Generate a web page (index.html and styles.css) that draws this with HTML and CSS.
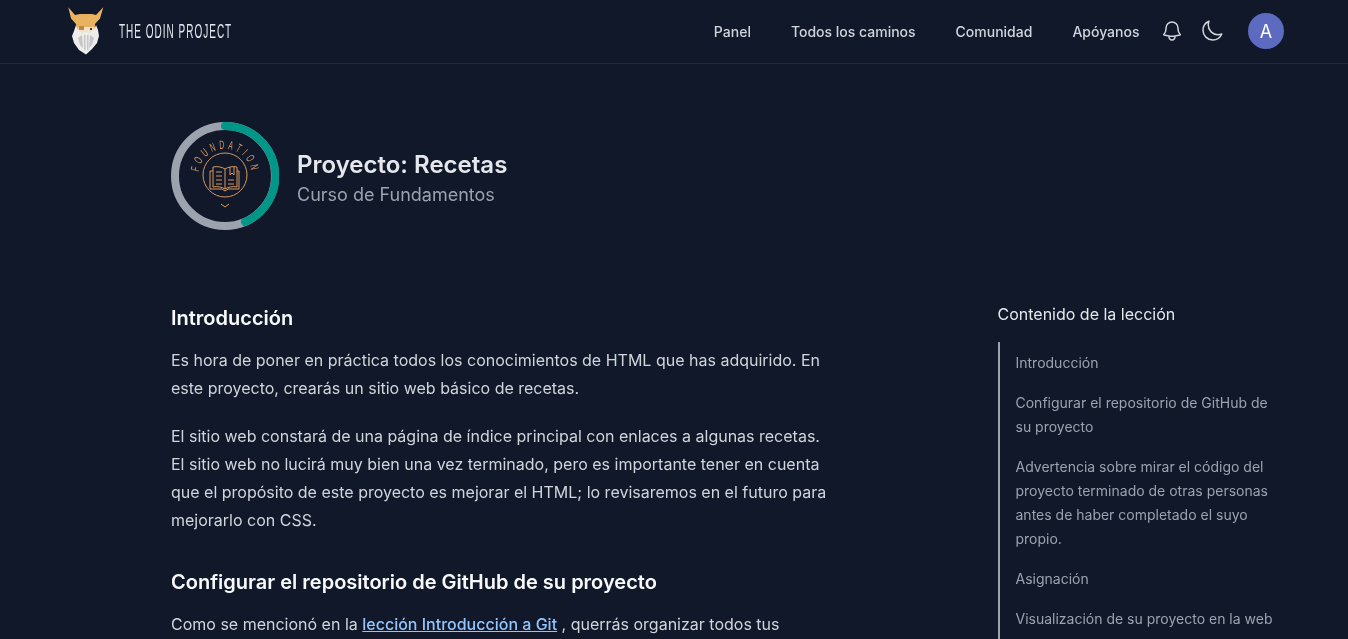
FILE: index.html
```html
<!DOCTYPE html>
<html lang="es">
<head>
    <meta charset="UTF-8">
    <meta name="viewport" content="width=device-width, initial-scale=1.0">
    <title>Proyecto: Recetas | The Odin Project</title>
    <link rel="stylesheet" href="styles.css">
</head>
<body>
    <header class="navbar">
        <a class="brand" href="#">
            <svg class="brand-logo" viewBox="0 0 36 48" width="36" height="48">
                <path fill="#e8b25e" d="M0.3 0.3L7 8 12 7H24L28 8 35.300 0.300 32 11.500 27 17 27 25H9L8 17 3 11.500z"/>
                <path fill="#f1e2cc" d="M11 20h15l1 5-4 3H13l-4-3z"/>
                <path fill="#b88a45" d="M11 19h5v4h-5z"/>
                <path fill="#ededed" d="M8 18l2 5 4 3 4-1 4 1 4-3 2-5 2 5 1 6-2 7-5 6-6 5.500-7-4.500-5-7-2-7 2-5z"/>
                <path fill="#c6c6c6" d="M10 31l4-3 1 13-3-3zM16 28h1.500v15H16zM19 28h1.500v15H19zM22 28l4 3-2 7-3 3z"/>
                <path fill="#33343a" d="M22 21h2v2h-2z"/>
            </svg>
            <span class="brand-name">THE ODIN PROJECT</span>
        </a>
        <nav class="nav-links">
            <a href="#">Panel</a>
            <a href="#">Todos los caminos</a>
            <a href="#">Comunidad</a>
            <a href="#">Apóyanos</a>
        </nav>
        <div class="nav-icons">
            <svg class="nav-icon" viewBox="0 0 24 24" width="24" height="24" fill="none" stroke="currentColor" stroke-width="1.5" stroke-linecap="round" stroke-linejoin="round">
                <path d="M14.857 17.082a23.848 23.848 0 005.454-1.31A8.967 8.967 0 0118 9.75v-.7V9A6 6 0 006 9v.75a8.967 8.967 0 01-2.312 6.022c1.733.64 3.56 1.085 5.455 1.31m5.714 0a24.255 24.255 0 01-5.714 0m5.714 0a3 3 0 11-5.714 0"/>
            </svg>
            <svg class="nav-icon" viewBox="0 0 24 24" width="24" height="24" fill="none" stroke="currentColor" stroke-width="1.5" stroke-linecap="round" stroke-linejoin="round">
                <path d="M21.752 15.002A9.718 9.718 0 0118 15.75c-5.385 0-9.75-4.365-9.75-9.75 0-1.33.266-2.597.748-3.752A9.753 9.753 0 003 11.25C3 16.635 7.365 21 12.750 21a9.753 9.753 0 009.002-5.998z"/>
            </svg>
        </div>
        <div class="avatar">A</div>
    </header>

    <main class="page">
        <div class="lesson-head">
            <svg class="badge" viewBox="0 0 108 108" width="108" height="108">
                <circle cx="54" cy="54" r="50" fill="none" stroke="#9ca3af" stroke-width="8"/>
                <path d="M54 4A50 50 0 0 1 74 100" fill="none" stroke="#009688" stroke-width="8" stroke-linecap="round"/>
                <g fill="none" stroke="#d9985f" stroke-width="1">
                    <circle cx="54" cy="53" r="22"/>
                    <path d="M54 47c-3-2-8-3-12-2v20c4-1 9 0 12 2 3-2 8-3 12-2V45c-4-1-9 0-12 2zM54 47v20"/>
                    <path d="M42 49h-3v18h12l3 2 3-2h11V49h-2"/>
                    <path d="M45 50h6M45 54h6M45 58h6M45 62h6M57 58h6M57 62h6M59 45v8l2-2 2 2v-8"/>
                    <path d="M50 82l4 3 4-3"/>
                </g>
                <defs><path id="badge-arc" d="M27.700 50A26.500 26.500 0 0 1 80.300 50"/></defs>
                <text class="badge-text"><textPath href="#badge-arc" textLength="78" lengthAdjust="spacingAndGlyphs">FOUNDATION</textPath></text>
            </svg>
            <div class="lesson-info">
                <h1 class="lesson-title">Proyecto: Recetas</h1>
                <p class="lesson-course">Curso de Fundamentos</p>
            </div>
        </div>

        <div class="lesson-body">
            <article class="lesson-text">
                <h2>Introducción</h2>
                <p>Es hora de poner en práctica todos los conocimientos de HTML que has adquirido. En este proyecto, crearás un sitio web básico de recetas.</p>
                <p>El sitio web constará de una página de índice principal con enlaces a algunas recetas. El sitio web no lucirá muy bien una vez terminado, pero es importante tener en cuenta que el propósito de este proyecto es mejorar el HTML; lo revisaremos en el futuro para mejorarlo con CSS.</p>
                <h2>Configurar el repositorio de GitHub de su proyecto</h2>
                <p>Como se mencionó en la <a href="#">lección Introducción a Git</a> , querrás organizar todos tus</p>
            </article>
            <aside class="toc">
                <h4>Contenido de la lección</h4>
                <ul>
                    <li>Introducción</li>
                    <li>Configurar el repositorio de GitHub de su proyecto</li>
                    <li>Advertencia sobre mirar el código del proyecto terminado de otras personas antes de haber completado el suyo propio.</li>
                    <li>Asignación</li>
                    <li>Visualización de su proyecto en la web</li>
                </ul>
            </aside>
        </div>
    </main>
</body>
</html>
```

FILE: styles.css
```css
html, body { height: 100%; overflow: hidden; }
body { margin: 0; background: #10182a; color: #d1d5db; font-family: Inter, "Liberation Sans", sans-serif; }
a { color: inherit; text-decoration: none; }

.navbar { display: flex; align-items: center; height: 62px; padding: 0 64px 1px 68px; border-bottom: 1px solid #1f2937; will-change: transform; }
.brand { display: flex; align-items: center; gap: 15px; margin-right: auto; }
.brand-logo { display: block; }
.brand-name { display: inline-block; width: 113px; white-space: nowrap; font-family: "Liberation Sans", sans-serif; font-size: 20px; color: #e5e7eb; letter-spacing: 2px; transform: scaleX(0.5); transform-origin: left center; }
.nav-links { display: flex; gap: 40px; margin-top: 1px; font-size: 14px; font-weight: 500; line-height: 20px; }
.nav-icons { display: flex; gap: 16px; margin-left: 20.5px; color: #d1d5db; }
.nav-icon { display: block; }
.avatar { display: flex; align-items: center; justify-content: center; width: 36px; height: 36px; margin-left: 24px; border-radius: 50%; background: #5c6bc0; color: #fff; font-size: 18px; }

.page { padding: 58px 64px 0 171px; will-change: transform; }
.lesson-head { display: flex; align-items: center; gap: 18px; }
.lesson-info { padding-top: 6px; }
.badge { display: block; }
.badge-text { font-family: "Liberation Sans", sans-serif; font-size: 12px; letter-spacing: 6px; fill: #d9985f; }
.lesson-title { margin: 0; font-size: 24px; line-height: 32px; font-weight: 600; color: #e5e7eb; }
.lesson-course { margin: 0; font-size: 18px; line-height: 28px; color: #9ca3af; }

.lesson-body { display: flex; justify-content: space-between; margin-top: 74px; }
.lesson-text { width: 660px; font-size: 16px; line-height: 28px; }
.lesson-text h2 { margin: 0 0 14px; font-size: 20px; line-height: 28px; font-weight: 600; color: #f9fafb; }
.lesson-text p { margin: 0 0 20px; }
.lesson-text p + h2 { margin-top: 34px; }
.lesson-text a { color: #93c5fd; text-decoration: underline; font-weight: 500; }

.toc { width: 286.5px; margin-top: -2px; }
.toc h4 { margin: 0 0 16px; font-size: 16px; line-height: 24px; font-weight: 400; color: #e5e7eb; }
.toc ul { margin: 0; padding: 9px 0 40px 16px; list-style: none; border-left: 2px solid #9ca3af; font-size: 14px; line-height: 24px; color: #9ca3af; }
.toc li { margin-bottom: 16px; }
```
